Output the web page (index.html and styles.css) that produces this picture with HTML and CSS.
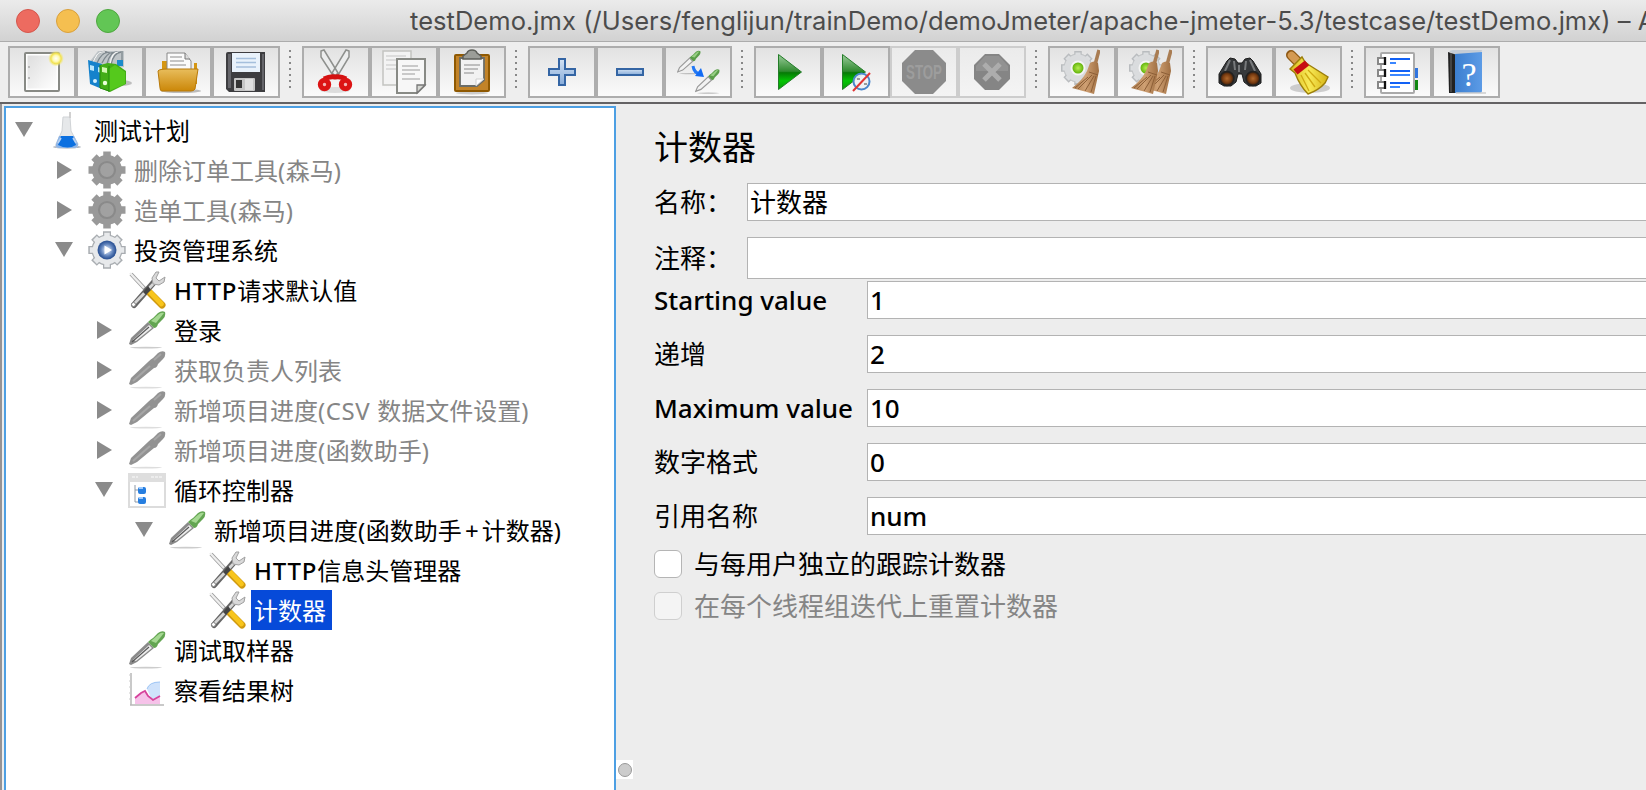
FILE: index.html
```html
<!DOCTYPE html>
<html lang="zh-CN">
<head>
<meta charset="utf-8">
<title>testDemo.jmx</title>
<link rel="stylesheet" href="styles.css">
</head>
<body>
<svg class="defs" width="0" height="0">
  <defs>
    <linearGradient id="gGreen" x1="0" y1="0" x2="0" y2="1"><stop offset="0" stop-color="#9dcc9d"/><stop offset=".48" stop-color="#2f8a2f"/><stop offset=".52" stop-color="#067a06"/><stop offset=".75" stop-color="#04c404"/><stop offset="1" stop-color="#079a07"/></linearGradient>
    <linearGradient id="gBlue" x1="0" y1="0" x2="0" y2="1"><stop offset="0" stop-color="#d3e2f3"/><stop offset="1" stop-color="#86abd9"/></linearGradient>
    <linearGradient id="gFolder" x1="0" y1="0" x2="0" y2="1"><stop offset="0" stop-color="#e8bd5c"/><stop offset="1" stop-color="#cb8708"/></linearGradient>
    <linearGradient id="gPage" x1="0" y1="0" x2="1" y2="1"><stop offset="0" stop-color="#dedede"/><stop offset="1" stop-color="#fff"/></linearGradient>
    <linearGradient id="gBook" x1="0" y1="0" x2="1" y2="0"><stop offset="0" stop-color="#3c7fd0"/><stop offset="1" stop-color="#5c9be6"/></linearGradient>
    <linearGradient id="gStraw" x1="0" y1="0" x2="1" y2="0"><stop offset="0" stop-color="#a8794c"/><stop offset=".5" stop-color="#cfa073"/><stop offset="1" stop-color="#a06f42"/></linearGradient>
    <linearGradient id="gYellow" x1="0" y1="0" x2="1" y2="0"><stop offset="0" stop-color="#d9b91d"/><stop offset=".5" stop-color="#f8ea58"/><stop offset="1" stop-color="#d6b415"/></linearGradient>
    <radialGradient id="gBall"><stop offset="0" stop-color="#b6ee50"/><stop offset="1" stop-color="#62b30c"/></radialGradient>
    <radialGradient id="gSun"><stop offset="0" stop-color="#fff"/><stop offset=".4" stop-color="#fff9b0"/><stop offset=".65" stop-color="#f1e14f"/><stop offset="1" stop-color="#f4ea80" stop-opacity="0"/></radialGradient>
    <radialGradient id="gLens"><stop offset="0" stop-color="#b0682c"/><stop offset=".6" stop-color="#7a3c10"/><stop offset="1" stop-color="#2a1a10"/></radialGradient>
    <radialGradient id="gHub"><stop offset="0" stop-color="#fff"/><stop offset=".35" stop-color="#a9bee0"/><stop offset=".7" stop-color="#5f82bb"/><stop offset="1" stop-color="#33599a"/></radialGradient>
    <symbol id="pipette" viewBox="0 0 38 38">
      <ellipse cx="18" cy="36.6" rx="16" ry=".8" fill="#ccc"/>
      <path d="M1 33L3 27L20 11L26 17L9 31L3 34Z" fill="#8a8a8a"/>
      <path d="M5 29L21 14L24 17L8 30Z" fill="#ededed"/>
      <path d="M4 31L21 16" stroke="#555" stroke-width="1.1"/>
      <path d="M20 11Q23 8 25 7L30 2Q34-1 37 1Q38 5 35 8L30 13Q29 17 26 17Z" fill="#63a552"/>
      <path d="M23 10L31 3Q34 1 36 2L28 12Z" fill="#a5d892"/>
    </symbol>
    <symbol id="pipette-light" viewBox="0 0 38 38">
      <ellipse cx="20" cy="36.6" rx="17" ry=".9" fill="#bbb"/>
      <path d="M1 34L4 27L20 12L25 17L9 31Z" fill="#f2f2f2" stroke="#9a9a9a" stroke-width="1.8"/>
      <path d="M20 11Q23 8 25 7L30 2Q34-1 37 1Q38 5 35 8L30 13Q29 17 26 17Z" fill="#5b9d4a"/>
      <path d="M23 10L31 3Q34 1 35 2L28 11Z" fill="#97cf84"/>
    </symbol>
    <symbol id="pipette-off" viewBox="0 0 38 38">
      <ellipse cx="18" cy="36.6" rx="16" ry=".8" fill="#ddd"/>
      <path d="M1 33L3 27L20 11Q23 8 25 7L30 2Q34-1 37 1Q38 5 35 8L30 13Q29 17 26 17L9 31L3 34Z" fill="#929292"/>
      <path d="M5 30L22 15M26 9L33 3" stroke="#a6a6a6" stroke-width="2"/>
    </symbol>
    <symbol id="gear" viewBox="0 0 38 38">
      <g stroke-width="8" fill="none"><path d="M19 .3V37.7M.3 19H37.700M6 6L32 32M32 6L6 32" stroke="#a9adb1"/><circle cx="19" cy="19" r="11.500" stroke="#a9adb1"/></g>
      <g stroke-width="5.500" fill="none" stroke="#e7e9eb"><path d="M19 1.800V36.200M1.800 19H36.200M7 7L31 31M31 7L7 31"/><circle cx="19" cy="19" r="11.500"/></g>
      <circle cx="19" cy="19" r="9.500" fill="#33599a"/><circle cx="19" cy="19" r="8.500" fill="url(#gHub)"/><path d="M16.500 14.500L24 19L16.500 23.500Z" fill="#fff"/>
    </symbol>
    <symbol id="gear-off" viewBox="0 0 38 38">
      <path d="M19 .5V37.5M.5 19H37.5M6 6L32 32M32 6L6 32" stroke="#999" stroke-width="7.5"/>
      <circle cx="19" cy="19" r="15" fill="#999"/><circle cx="19" cy="19" r="8" fill="#a1a1a1" stroke="#8a8a8a" stroke-width="2.2"/>
    </symbol>
    <symbol id="tools" viewBox="0 0 38 38">
      <path d="M3 3L17 18" stroke="#9a9a9a" stroke-width="4"/><path d="M2 2L16 17" stroke="#eee" stroke-width="2.400"/>
      <path d="M6 34L27 10" stroke="#666" stroke-width="6" stroke-linecap="round"/><path d="M5 34L27 11" stroke="#d6d6d6" stroke-width="2.8"/>
      <path d="M24 7L28 1L31 1L28 7L31 10L37 6L36 11L31 14L25 13Z" fill="#d9d9d9" stroke="#a0a0a0"/>
      <circle cx="5.5" cy="33.5" r="2" fill="#fff" stroke="#888"/>
      <path d="M22 22L34 34" stroke="#d09a10" stroke-width="7" stroke-linecap="round"/><path d="M22.500 21.500L33.500 33" stroke="#f8c51c" stroke-width="4.800" stroke-linecap="round"/>
      <path d="M15 21L20 15L23 19L18 24Z" fill="#444"/>
    </symbol>
    <symbol id="flask" viewBox="0 0 38 38">
      <ellipse cx="19" cy="36" rx="14" ry="1.500" fill="#a3a9b5"/>
      <path d="M15 6H22L23 20L30 33Q30 37 27 37H11Q7 37 8 33L14 20Z" fill="#e6e8ea" stroke="#d0d3d6"/>
      <path d="M22 7V1" stroke="#ccc" stroke-width="1.800"/>
      <path d="M11 25H26L30 33Q30 37 27 37H11Q7 37 8 33Z" fill="#8fb5e6"/><path d="M13 25H25L28 34Q20 39 10 34Z" fill="#0c70e0"/>
      <path d="M10 32L13 27M28 32L25 27" stroke="#b9d3f3" stroke-width="1.600"/>
    </symbol>
    <symbol id="controller" viewBox="0 0 38 38">
      <rect x="1" y="3" width="36" height="33" fill="#fff" stroke="#dcdcdc" stroke-width="2"/><rect x="0" y="2" width="38" height="9" fill="#dedede"/><path d="M4 6H10M23 6H35" stroke="#ededed" stroke-width="2" stroke-dasharray="3 1"/>
      <path d="M7 14V31H11M7 19H11" stroke="#8d98a5" fill="none"/><rect x="10" y="16" width="8" height="7" rx="2" fill="#267ee0"/><rect x="10" y="26" width="8" height="7" rx="2" fill="#267ee0"/><path d="M11 17H15M11 27H15" stroke="#9ccaff" stroke-width="2"/>
    </symbol>
    <symbol id="chart" viewBox="0 0 38 38">
      <path d="M3 2V34M2 34H36" stroke="#b8b8b8" stroke-width="1.500"/><path d="M1 4H3M1 10H3M1 16H3M1 22H3M1 28H3" stroke="#ccc"/>
      <path d="M19 18Q21 11 32 11V26L24 29Z" fill="#cfe2fb"/><path d="M19 18Q21 11 32 11" fill="none" stroke="#9cc4f5"/>
      <path d="M7 33V27L15 21L19 22L24 29L32 25V33Z" fill="#f6c2e9"/><path d="M7 27L13 22L17 20L20 25L25 29L32 25" fill="none" stroke="#d6439c" stroke-width="1.800"/>
    </symbol>
    <symbol id="broom" viewBox="0 0 28 46">
      <path d="M23 16L27 1" stroke="#a97c52" stroke-width="3.500"/>
      <path d="M18 14Q22 11 26 14L27 22L22 45L0 39Q10 32 15 22Z" fill="url(#gStraw)"/>
      <path d="M17 23L26 26M20 26L6 40M22 27L13 42M24 27L19 43M16 28L3 39" stroke="#8d5f37" stroke-width="1"/>
    </symbol>
    <symbol id="cog-ball" viewBox="0 0 36 36">
      <path d="M18 1V35M1 18H35M6 6L30 30M30 6L6 30" stroke="#b9bcbf" stroke-width="7.500"/><circle cx="18" cy="18" r="14.500" fill="#c0c3c5"/>
      <path d="M18 2.500V33M2.500 18H33M7 7L29 29M29 7L7 29" stroke="#dcdee0" stroke-width="5"/><circle cx="18" cy="18" r="13.500" fill="#dadcde"/><circle cx="18" cy="18" r="7.500" fill="#f4f4f4"/><circle cx="18" cy="18" r="5.500" fill="url(#gBall)"/>
    </symbol>
  </defs>
</svg>
<div class="window">
  <header class="titlebar">
    <div class="lights"><i class="light red"></i><i class="light amber"></i><i class="light green"></i></div>
    <div class="title">testDemo.jmx (/Users/fenglijun/trainDemo/demoJmeter/apache-jmeter-5.3/testcase/testDemo.jmx) – A</div>
  </header>
  <nav class="toolbar">
    <button class="tool"><svg viewBox="0 0 64 48"><rect x="15" y="5" width="34" height="38" rx="1" fill="#fff" stroke="#888a85" stroke-width="2"/><rect x="17.500" y="7.500" width="29" height="33" fill="url(#gPage)"/><circle cx="19" cy="19" r="1" fill="#aaa"/><circle cx="19" cy="30" r="1" fill="#aaa"/><circle cx="46" cy="10.500" r="8" fill="url(#gSun)"/></svg></button>
    <button class="tool"><svg viewBox="0 0 64 48"><ellipse cx="43" cy="35" rx="11" ry="3" fill="#888" opacity=".5"/><path d="M13 12L20 3H46V19L30 22L13 19Z" fill="#bfc5c8"/><path d="M15 13Q22 1 29 4M19 15Q25 2 32 5M24 15Q30 3 36 5M29 16Q32 3 40 4M33 17Q35 5 43 4M44 3V18" stroke="#7d878d" fill="none" stroke-width="1.300"/><path d="M14 17Q19 2 27 4M32 16Q34 4 40 4" stroke="#f6f6f6" fill="none" stroke-width="1.200"/><path d="M10 12L24 16V41L12 36Z" fill="#1582cc"/><path d="M12 17L16 18V23L12 22ZM20 19L23 20V25L20 24Z" fill="#b9e6fb"/><circle cx="17" cy="33" r="2" fill="#d4f0ff"/><path d="M39 12H45V18H39Z" fill="#1c8bca"/><path d="M22 17L30 15L38 16L48 23V36L32 44L22 40Z" fill="#43ad17"/><path d="M31 21L37 17L47 24V36L31 43Z" fill="#55c91c"/><path d="M31 18V44M22 17V40L31 43" stroke="#258a0e" fill="none"/><path d="M24 19L29 20V25L24 24Z" fill="#d3f8b2"/><circle cx="27" cy="35" r="2.200" fill="#eaffda"/></svg></button>
    <button class="tool"><svg viewBox="0 0 64 48"><ellipse cx="35" cy="43" rx="20" ry="2" fill="#bbb"/><path d="M16 24V13H22V22H48V15H51V36H16Z" fill="#d59612"/><path d="M21 24V5H39L45 13V24Z" fill="#fbfbfb" stroke="#888"/><path d="M39 5V11H44" fill="#ddd" stroke="#777"/><path d="M24 9H36M24 13H38M24 17H40" stroke="#b3b3b3" stroke-width="1.500"/><path d="M12 23Q13 21 22 21H52L49 41Q48 43 45 43H16Q14 43 14 40Z" fill="url(#gFolder)" stroke="#b97a0a"/></svg></button>
    <button class="tool"><svg viewBox="0 0 64 48"><path d="M12 6Q12 4 14 4H51V44H15L12 41Z" fill="#3d3d40"/><path d="M14 6H17V40H14ZM48 6H50V42H48Z" fill="#65656a"/><rect x="18" y="5" width="28" height="19" fill="#e9f2fb"/><path d="M22 10.500H42M22 14.500H42M22 19H42" stroke="#a5bfdc" stroke-width="1.500"/><rect x="20" y="30" width="21" height="13" rx="1" fill="#c6c6c6"/><rect x="22" y="32" width="6" height="8" fill="#353535"/><path d="M31 31H39V42H31Z" fill="#e0e0e0"/></svg></button>
    <i class="sep"></i>
    <button class="tool"><svg viewBox="0 0 64 48"><ellipse cx="31" cy="42" rx="15" ry="3" fill="#ddd"/><path d="M17 3L20 2L34 25L30 29L17 9ZM45 3L42 2L28 25L33 29L45 9Z" fill="#eceded" stroke="#8e908d" stroke-width="1.500"/><path d="M20 31Q26 28 31 29Q37 28 42 31" stroke="#d41111" stroke-width="5" fill="none"/><ellipse cx="20.500" cy="36.500" rx="4.200" ry="4.200" fill="#f3b5b5" stroke="#dc1414" stroke-width="5"/><ellipse cx="41.500" cy="36.500" rx="4.200" ry="4.200" fill="#f3b5b5" stroke="#dc1414" stroke-width="5"/></svg></button>
    <button class="tool"><svg viewBox="0 0 64 48"><rect x="11" y="3" width="28" height="34" fill="#f3f3f3" stroke="#c3c4c1" stroke-width="1.500"/><path d="M14 8H34M14 12H32M14 17H24M14 21H24" stroke="#d5d5d5" stroke-width="1.500"/><path d="M25 11H53V37L45 45H25Z" fill="#f7f7f7" stroke="#888a85" stroke-width="2"/><path d="M30 18H46M30 22H48M30 26H43M30 31H48" stroke="#bbb" stroke-width="1.500"/><path d="M45 45V37H53Z" fill="#d5d7d2" stroke="#777" stroke-width="1.300"/></svg></button>
    <button class="tool"><svg viewBox="0 0 64 48"><ellipse cx="32" cy="45" rx="16" ry="1.500" fill="#ccc"/><rect x="15" y="7" width="34" height="36" rx="1" fill="#c28328" stroke="#8f5902" stroke-width="2"/><path d="M20 10H44V32L37 38H20Z" fill="#f2f2f2" stroke="#6b6d68" stroke-width="1.800"/><path d="M24 17H40M24 21H38M24 25H34" stroke="#adadad" stroke-width="1.500"/><path d="M36 38V31H44Z" fill="#fff" stroke="#d0d0d0"/><path d="M23 11V8L27 5Q28 2 32 2Q36 2 37 5L41 8V11Z" fill="#9b9d98" stroke="#5d5f5a" stroke-width="1.500"/></svg></button>
    <i class="sep"></i>
    <button class="tool"><svg viewBox="0 0 64 48"><path d="M29 11H35V21H45V27H35V37H29V27H19V21H29Z" fill="url(#gBlue)" stroke="#3465a4" stroke-width="2"/></svg></button>
    <button class="tool"><svg viewBox="0 0 64 48"><rect x="19" y="21" width="26" height="6" fill="url(#gBlue)" stroke="#3465a4" stroke-width="2"/></svg></button>
    <button class="tool"><svg viewBox="0 0 64 48"><use href="#pipette-light" x="11" y="2" width="24" height="25"/><use href="#pipette-light" x="29" y="21" width="25" height="25"/><path d="M27 18Q28 25 34 26" stroke="#2378f5" stroke-width="3" fill="none"/><path d="M35 20L38 29L29 28Z" fill="#126bf4"/></svg></button>
    <i class="sep"></i>
    <button class="tool"><svg viewBox="0 0 64 48"><path d="M22.500 6.500L45.500 24L22.500 41.500Z" fill="url(#gGreen)" stroke="#237d28"/></svg></button>
    <button class="tool"><svg viewBox="0 0 64 48"><path d="M18.500 6.500L41.500 24L18.500 41.500Z" fill="url(#gGreen)" stroke="#237d28"/><circle cx="37.500" cy="33.500" r="8" fill="#eef1f5" fill-opacity=".93" stroke="#4a87cc" stroke-width="2"/><path d="M33 31H36M40 36H43" stroke="#9a9a9a" stroke-width="2"/><path d="M29 43L46 25" stroke="#e03535" stroke-width="2"/></svg></button>
    <button class="tool off"><svg viewBox="0 0 64 48"><path d="M23 2H41L54 15V33L41 46H23L10 33V15Z" fill="#8b8b8b"/><text class="stop" x="14" y="31" textLength="36" lengthAdjust="spacingAndGlyphs">STOP</text></svg></button>
    <button class="tool off"><svg viewBox="0 0 64 48"><path d="M25 6H39L50 17V31L39 42H25L14 31V17Z" fill="#858585"/><path d="M16 18L25 8H39L48 18V23H16Z" fill="#929292"/><path d="M24 16L40 32M40 16L24 32" stroke="#adadad" stroke-width="5"/></svg></button>
    <i class="sep"></i>
    <button class="tool"><svg viewBox="0 0 64 48"><use href="#cog-ball" x="10" y="2" width="36" height="36"/><use href="#broom" x="22" y="1" width="28" height="46"/></svg></button>
    <button class="tool"><svg viewBox="0 0 64 48"><use href="#cog-ball" x="10" y="2" width="36" height="36"/><use href="#broom" x="26" y="1" width="28" height="46"/><use href="#broom" x="13" y="1" width="28" height="46"/></svg></button>
    <i class="sep"></i>
    <button class="tool"><svg viewBox="0 0 64 48"><path d="M22 10L27 11L30 15H34L37 11L42 10L45 13L53 26V35L48 38H41L36 34L34 26H30L28 34L23 38H16L11 35V26L19 13Z" fill="#37393b" stroke="#1c1c1c"/><path d="M22 12L17 23M26 13L27 22M38 13L37 22M42 12L47 23M31 17V24" stroke="#77797b" stroke-width="2"/><circle cx="19" cy="30.500" r="7" fill="url(#gLens)" stroke="#222" stroke-width="1.500"/><circle cx="45" cy="30.500" r="7" fill="url(#gLens)" stroke="#222" stroke-width="1.500"/></svg></button>
    <button class="tool"><svg viewBox="0 0 64 48"><ellipse cx="34" cy="40" rx="20" ry="5" fill="#bbb" opacity=".7"/><path d="M15 7L22 14" stroke="#8f5914" stroke-width="10" stroke-linecap="round"/><path d="M15.500 7.500L22 14" stroke="#d49a52" stroke-width="7.500" stroke-linecap="round"/><path d="M14 21L26 9L29 14L33 17L52 29L49 35Q43 42 32 46Q24 38 19 25Z" fill="url(#gYellow)" stroke="#9c7f0a" stroke-width="1.400"/><path d="M25 27L33 43M29 25L39 39M32 22L45 35" stroke="#d0aa12" stroke-width="1.300"/><path d="M19.500 24L31 15" stroke="#c70f12" stroke-width="6.500"/></svg></button>
    <i class="sep"></i>
    <button class="tool"><svg viewBox="0 0 64 48"><rect x="48" y="20" width="4" height="10" fill="#3175df"/><rect x="48" y="32" width="4" height="10" fill="#128712"/><rect x="15" y="5" width="33" height="40" rx="1" fill="#fff" stroke="#aaa" stroke-width="2"/><path d="M24 11H44M24 23H44M24 35H44" stroke="#1261f5" stroke-width="2"/><path d="M24 15H30M24 27H44M24 39H34" stroke="#3b86ff" stroke-width="2"/><g stroke="#888" stroke-width="2" fill="#fff"><path d="M19 10H12V16H19M19 22H12V28H19M19 34H12V40H19"/></g><path d="M19 9V17M19 21V29M19 33V41" stroke="#111" stroke-width="2.300"/></svg></button>
    <button class="tool"><svg viewBox="0 0 64 48"><path d="M15 3L19 2H48L47 6L21 7Z" fill="#c4ccd6"/><path d="M14 4L23 7V45H15Z" fill="#222"/><path d="M17 5V44" stroke="#666" stroke-width="1"/><path d="M21 6L48 4V43Q48 45 46 45H21Z" fill="url(#gBook)"/><path d="M22 45H52" stroke="#ccc" stroke-width="1.500"/><text class="help" x="35" y="38" text-anchor="middle">?</text></svg></button>
  </nav>
  <main class="body">
    <aside class="tree">
      <div class="row l0"><i class="arrow open"></i><svg class="icon"><use href="#flask"/></svg><span class="name">测试计划</span></div>
      <div class="row l1 dim"><i class="arrow"></i><svg class="icon"><use href="#gear-off"/></svg><span class="name">删除订单工具<span class="paren">(</span>森马<span class="paren">)</span></span></div>
      <div class="row l1 dim"><i class="arrow"></i><svg class="icon"><use href="#gear-off"/></svg><span class="name">造单工具<span class="paren">(</span>森马<span class="paren">)</span></span></div>
      <div class="row l1"><i class="arrow open"></i><svg class="icon"><use href="#gear"/></svg><span class="name">投资管理系统</span></div>
      <div class="row l2"><i class="arrow none"></i><svg class="icon"><use href="#tools"/></svg><span class="name"><span class="latin">HTTP</span>请求默认值</span></div>
      <div class="row l2"><i class="arrow"></i><svg class="icon"><use href="#pipette"/></svg><span class="name">登录</span></div>
      <div class="row l2 dim"><i class="arrow"></i><svg class="icon"><use href="#pipette-off"/></svg><span class="name">获取负责人列表</span></div>
      <div class="row l2 dim"><i class="arrow"></i><svg class="icon"><use href="#pipette-off"/></svg><span class="name">新增项目进度<span class="paren">(CSV </span>数据文件设置<span class="paren">)</span></span></div>
      <div class="row l2 dim"><i class="arrow"></i><svg class="icon"><use href="#pipette-off"/></svg><span class="name">新增项目进度<span class="paren">(</span>函数助手<span class="paren">)</span></span></div>
      <div class="row l2"><i class="arrow open"></i><svg class="icon"><use href="#controller"/></svg><span class="name">循环控制器</span></div>
      <div class="row l3"><i class="arrow open"></i><svg class="icon"><use href="#pipette"/></svg><span class="name">新增项目进度<span class="paren">(</span>函数助手<span class="plus">+</span>计数器<span class="paren">)</span></span></div>
      <div class="row l4"><i class="arrow none"></i><svg class="icon"><use href="#tools"/></svg><span class="name"><span class="latin">HTTP</span>信息头管理器</span></div>
      <div class="row l4"><i class="arrow none"></i><svg class="icon"><use href="#tools"/></svg><span class="name selected">计数器</span></div>
      <div class="row l2"><i class="arrow none"></i><svg class="icon"><use href="#pipette"/></svg><span class="name">调试取样器</span></div>
      <div class="row l2"><i class="arrow none"></i><svg class="icon"><use href="#chart"/></svg><span class="name">察看结果树</span></div>
    </aside>
    <div class="splitter"><i class="knob"></i></div>
    <section class="panel">
      <h1>计数器</h1>
      <div class="field short"><label>名称：</label><div class="input">计数器</div></div>
      <div class="field short comment"><label>注释：</label><div class="input"></div></div>
      <div class="field"><label class="medium">Starting value</label><div class="input medium">1</div></div>
      <div class="field"><label>递增</label><div class="input medium">2</div></div>
      <div class="field"><label class="medium">Maximum value</label><div class="input medium">10</div></div>
      <div class="field"><label>数字格式</label><div class="input medium">0</div></div>
      <div class="field"><label>引用名称</label><div class="input medium">num</div></div>
      <div class="check"><i class="box"></i><span>与每用户独立的跟踪计数器</span></div>
      <div class="check dim"><i class="box"></i><span>在每个线程组迭代上重置计数器</span></div>
    </section>
  </main>
</div>
</body>
</html>
```
FILE: styles.css
```css
* { box-sizing: border-box; }
body { margin: 0; background: #ededed; color: #000; overflow: hidden; font-family: "Noto Sans", "Noto Sans CJK SC", sans-serif; }
.defs { position: absolute; }
.window { display: flex; flex-direction: column; width: 1646px; height: 790px; overflow: hidden; }

.titlebar { flex: none; height: 42px; display: flex; align-items: center; background: linear-gradient(#ebebeb, #d2d2d2); border-bottom: 1px solid #acacac; }
.lights { display: flex; gap: 16px; padding-left: 16px; width: 410px; flex: none; }
.light { width: 24px; height: 24px; border-radius: 50%; border: 1px solid; }
.red { background: #ed6b60; border-color: #d5564c; }
.amber { background: #f5bf50; border-color: #d9a03c; }
.green { background: #62c655; border-color: #4ea73f; }
.title { font-family: Inter, sans-serif; font-size: 25.500px; letter-spacing: .04px; color: #4c4c4c; white-space: nowrap; line-height: 40px; padding-top: 1px; }

.toolbar { flex: none; height: 62px; display: flex; align-items: flex-start; padding: 4px 0 0 8px; border-bottom: 2px solid #646264; background: #eee; }
.tool { flex: none; width: 68px; height: 52px; padding: 0; border: 2px solid #adadad; border-radius: 0; background: linear-gradient(#e2e2e2, #fafafa); }
.tool svg { display: block; width: 64px; height: 48px; }
.tool.off { border-color: #cdcdcd; background: linear-gradient(#ebebeb, #f4f4f4); }
.sep { flex: none; width: 2px; height: 38px; margin: 4px 11px 0 9px; background: repeating-linear-gradient(#888 0 2px, transparent 2px 6px); }
.stop { font: bold 20px "Liberation Sans", sans-serif; fill: #9d9d9d; }
.help { font: 34px "Liberation Serif", serif; fill: #fff; }

.body { flex: 1; min-height: 0; display: flex; border-left: 2px solid #959395; }
.tree { flex: none; width: 612px; margin: 2px 0 0 2px; padding: 2px 0 0; border: 2px solid #4d9fe3; border-bottom: 0; background: #fff; }
.row { display: flex; align-items: center; height: 40px; font-size: 24px; white-space: nowrap; }
.l0 { padding-left: 9px; }
.l1 { padding-left: 49px; }
.l2 { padding-left: 89px; }
.l3 { padding-left: 129px; }
.l4 { padding-left: 169px; }
.arrow { flex: none; width: 18px; height: 18px; background: #8b8b8b; clip-path: polygon(2px 0, 17px 9px, 2px 18px); }
.arrow.open { clip-path: polygon(0 1px, 18px 1px, 9px 16px); }
.arrow.none { visibility: hidden; }
.icon { flex: none; width: 38px; height: 38px; margin-left: 15px; }
.name { height: 40px; line-height: 41px; margin-left: 5px; padding: 0 3px; }
.latin { font-weight: 500; letter-spacing: .8px; }
.paren { letter-spacing: .6px; }
.plus { display: inline-block; width: 20px; text-align: center; }
.dim { color: #858585; }
.selected { background: #064ad9; color: #fff; padding-right: 6px; }

.splitter { flex: none; width: 18px; display: flex; flex-direction: column; justify-content: flex-end; padding: 0 0 11px; }
.knob { width: 17px; height: 19px; background: #fff; display: flex; align-items: center; justify-content: center; }
.knob::before { content: ""; width: 12px; height: 12px; border-radius: 50%; background: #ccc; border: 1px solid #999; }

.panel { flex: 1; padding: 18px 0 0 20px; overflow: hidden; font-size: 26px; }
h1 { margin: 0 0 11px; height: 50px; line-height: 51px; font-size: 34px; font-weight: 400; }
.field { display: flex; align-items: center; height: 38px; margin-bottom: 16px; white-space: nowrap; }
.field label { flex: none; width: 213px; line-height: 36px; }
.field.short label { width: 93px; }
.medium { font-weight: 500; }
.input { flex: none; width: 1000px; height: 100%; padding-left: 2px; line-height: 36px; background: #fff; border: 1px solid #b3b3b3; }
.field.comment { height: 42px; margin-bottom: 2px; }
.check { display: flex; align-items: center; height: 28px; margin: 0 0 14px; gap: 12px; white-space: nowrap; }
.field + .check { margin-top: -1px; }
.check span { line-height: 28px; }
.box { width: 28px; height: 28px; border-radius: 6px; border: 1px solid #b5b5b5; background: #fff; }
.dim .box { background: #f4f4f4; border-color: #cfcfcf; }
```
